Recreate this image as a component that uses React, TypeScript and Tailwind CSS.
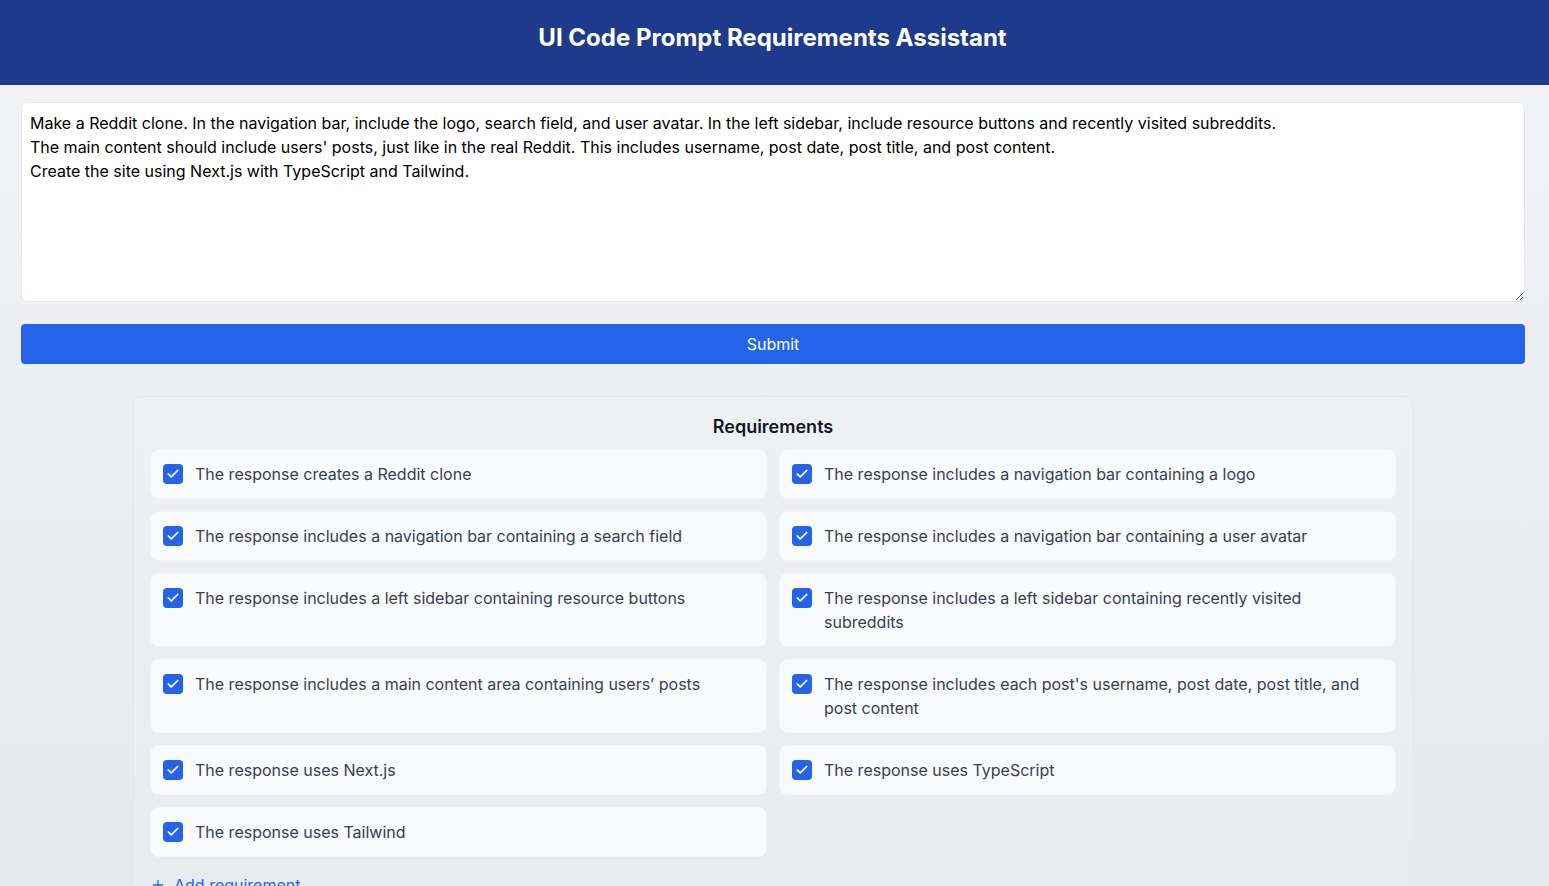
import { Plus, Check } from "lucide-react";

const requirements = [
  "The response creates a Reddit clone",
  "The response includes a navigation bar containing a logo",
  "The response includes a navigation bar containing a search field",
  "The response includes a navigation bar containing a user avatar",
  "The response includes a left sidebar containing resource buttons",
  "The response includes a left sidebar containing recently visited subreddits",
  "The response includes a main content area containing users’ posts",
  "The response includes each post's username, post date, post title, and post content",
  "The response uses Next.js",
  "The response uses TypeScript",
  "The response uses Tailwind",
];

const prompt = `Make a Reddit clone. In the navigation bar, include the logo, search field, and user avatar. In the left sidebar, include resource buttons and recently visited subreddits.
The main content should include users' posts, just like in the real Reddit. This includes username, post date, post title, and post content.
Create the site using Next.js with TypeScript and Tailwind.`;

function RequirementItem({ text }: { text: string }) {
  return (
    <label className="flex items-start gap-3 rounded-lg border border-[#f3f4f6] bg-[#f9fafb] p-3">
      <span className="mt-0.5 flex h-5 w-5 shrink-0 items-center justify-center rounded bg-[#2563eb]">
        <Check className="h-3.5 w-3.5 text-white" strokeWidth={3} />
      </span>
      <span className="text-base leading-6 text-[#374151]">{text}</span>
    </label>
  );
}

export default function App() {
  return (
    <div className="min-h-screen bg-linear-to-b from-[#f3f4f6] to-[#e5e7eb] font-['Inter',sans-serif]">
      <header className="flex h-[85px] justify-center bg-[#1e3a8a] pt-[22px] pr-1">
        <h1 className="text-2xl font-bold text-white">
          UI Code Prompt Requirements Assistant
        </h1>
      </header>

      <main className="pl-[21px] pr-6 pt-[17px] pb-10">
        <textarea
          defaultValue={prompt}
          className="block h-[200px] w-full rounded-md border border-[#e5e7eb] bg-white p-2 text-base leading-6 text-black outline-none"
        />
        <button className="mt-[22px] h-10 w-full rounded bg-[#2563eb] text-base text-white">
          Submit
        </button>

        <section className="mx-auto mt-8 max-w-7xl rounded-lg border border-[#e5e7eb] bg-[#f3f4f6]/30 p-4">
          <h2 className="mb-2 text-center text-lg font-semibold text-[#111827]">
            Requirements
          </h2>
          <div className="grid grid-cols-2 gap-3">
            {requirements.map((r) => (
              <RequirementItem key={r} text={r} />
            ))}
          </div>
          <button className="mt-4 flex items-center gap-2 text-base text-[#2563eb]">
            <Plus className="h-4 w-4" />
            Add requirement
          </button>
        </section>
      </main>
    </div>
  );
}
